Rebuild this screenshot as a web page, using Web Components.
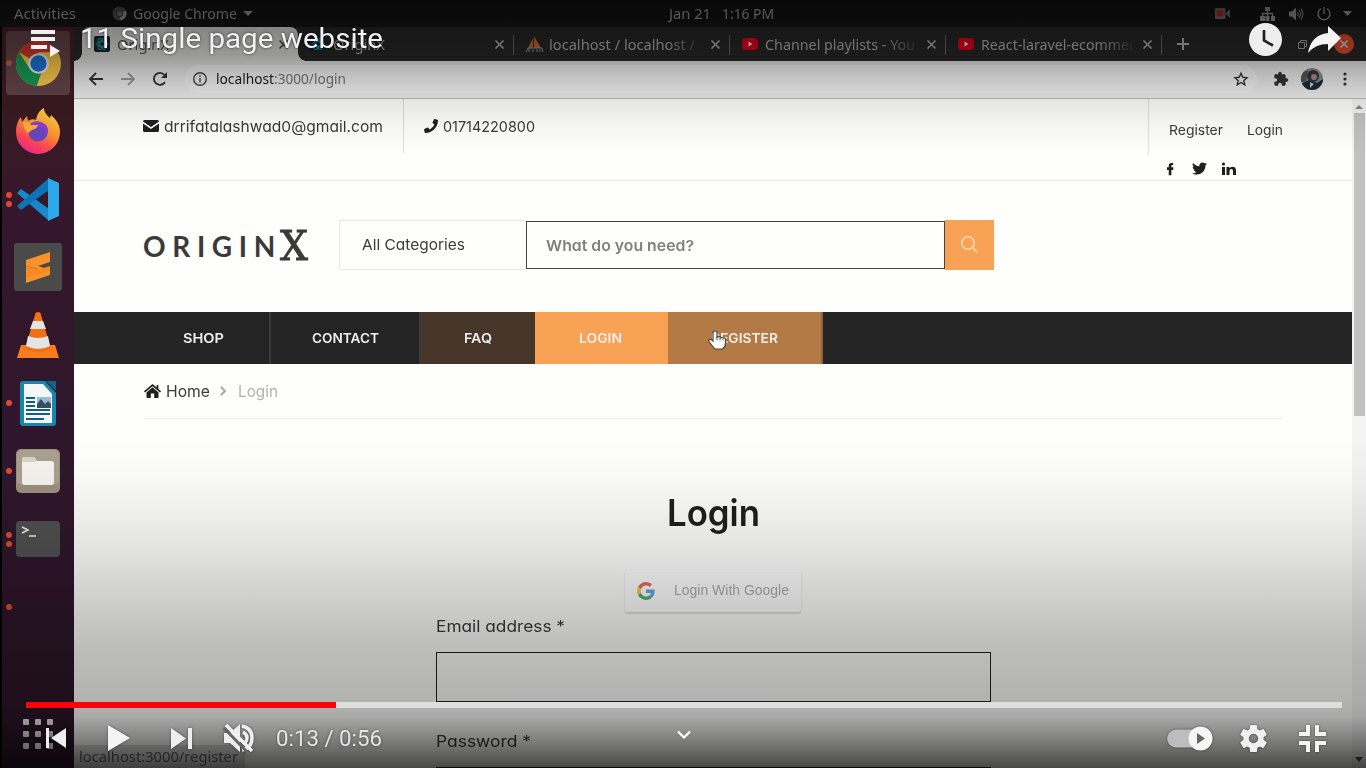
<!DOCTYPE html>
<html lang="en"><head><meta charset="utf-8"><title>11 Single page website</title>
<style>html,body{margin:0;background:#000;overflow:hidden}</style></head>
<body>
<video-player></video-player>
<script>
const define = (name, css, html, init) => {
  const t = document.createElement('template');
  t.innerHTML = `<style>*{box-sizing:border-box}svg{display:block;flex:none;overflow:visible}${css}</style>${html}`;
  customElements.define(name, class extends HTMLElement {
    constructor() { super(); this.attachShadow({mode: 'open'}).append(t.content.cloneNode(true)); }
    connectedCallback() { if (init) init.call(this, this.shadowRoot); }
  });
};

/* Text run fitted to the width in the w attribute: stretched by default, letter-spaced with the track attribute */
define('fit-text', `:host{display:block;flex:none;white-space:nowrap}span{display:inline-block;transform-origin:0 50%}`, `<span><slot></slot></span>`, function (r) {
  const w = +this.getAttribute('w'), s = r.querySelector('span');
  const nat = s.getBoundingClientRect().width;
  if (nat && this.hasAttribute('track')) s.style.letterSpacing = (w - nat) / this.textContent.length + 'px';
  else if (nat) s.style.transform = `scaleX(${w / nat})`;
  this.style.width = w + 'px';
});

define('system-bar', `
:host{display:flex;align-items:center;height:27px;background:#151515;color:#b0b0b0;font:13.5px "Noto Sans",sans-serif;padding:0 14px 0 14px}
.app{display:flex;align-items:center;margin-left:36px}.app svg:first-child{margin-right:6px}.app svg:last-child{margin-left:6px}
.date{display:flex;gap:11px;margin-left:416px}.tray{display:flex;align-items:center;margin-left:auto}
`, `
<fit-text w="62">Activities</fit-text>
<div class="app"><svg width="15" height="15" viewBox="0 0 16 16"><circle cx="8" cy="8" r="7.5" fill="#555"/><path d="M8 8 15 5A7.5 7.5 0 0 1 9 15.4z" fill="#aaa"/><circle cx="8" cy="8" r="3.5" fill="#777" stroke="#333"/></svg>
<fit-text w="104">Google Chrome</fit-text><svg width="10" height="5"><path d="M0 0h10L5 5z" fill="#b0b0b0"/></svg></div>
<div class="date"><fit-text w="42">Jan 21</fit-text><fit-text w="52">1:16 PM</fit-text></div>
<div class="tray">
<svg width="15" height="11" style="margin-right:30px"><rect width="10.5" height="11" rx="1" fill="#777"/><path d="M11 5 15 1v9l-4-4z" fill="#777"/><circle cx="5" cy="5.5" r="3.3" fill="#d22"/></svg>
<svg width="15" height="14" style="margin-right:14px" fill="#aaa"><path d="M5 0h5v4H5zM0 9h5v5H0zM5.500 9h4v5h-4zM11 9h4v5h-4z"/><path d="M7.500 3v7M2.500 10V6.500h10V10" fill="none" stroke="#aaa" stroke-width="1.300"/></svg>
<svg width="14" height="14" style="margin-right:14px"><path d="M0 4.500h3l4-4v13l-4-4H0z" fill="#aaa"/><path d="M8.500 5q1.500 2 0 4M10 3q3.300 4 0 8M12 1.500q4 5.500 0 11" fill="none" stroke="#999" stroke-width="1.100"/></svg>
<svg width="14" height="14" style="margin-right:12px" fill="none" stroke="#aaa" stroke-width="1.400"><path d="M4 1.600A6 6 0 1 0 10 1.600M7 0v7"/></svg>
<svg width="9" height="5"><path d="M0 0h9L4.500 5z" fill="#b0b0b0"/></svg></div>`);

/* Dock launcher; the dots attribute gives the number of open windows */
define('dock-item', `
:host{display:flex;align-items:center;height:68px;width:72px}
.d{width:14px;display:flex;flex-direction:column;gap:3px;align-items:center}
i{width:6px;height:6px;border-radius:50%;background:#dc4b2f}
.t{width:44px;height:44px;display:flex;align-items:center;justify-content:center}
:host([active]) .t{box-shadow:0 0 0 10px #8c747877;border-radius:1px;background:#8c747877}
`, `<div class="d"></div><div class="t"><slot></slot></div>`, function (r) {
  r.querySelector('.d').innerHTML = '<i></i>'.repeat(+this.getAttribute('dots') || 0);
});

define('app-dock', `
:host{display:block;width:74px;flex:none;border-left:2px solid #000;padding-top:2px;background:linear-gradient(#481f25,#3a1a22 80px,#34172c 190px,#2f162c 60%,#2b1527)}
`, `
<dock-item active dots="1"><svg width="45" height="45" viewBox="0 0 48 48"><circle cx="24" cy="24" r="24" fill="#fbc94b"/><path d="M24 24 3.200 12A24 24 0 0 1 44.800 12H24z" fill="#d93a31"/><path d="M3.200 12 15 30 27 34 22 48A24 24 0 0 1 3.200 12z" fill="#169a54"/><circle cx="24" cy="24" r="11" fill="#eee"/><circle cx="24" cy="24" r="8.700" fill="#1a73d4"/></svg></dock-item>
<dock-item><svg width="46" height="46" viewBox="0 0 46 46"><defs><linearGradient id="f" x1=".8" y1="0" x2=".3" y2="1"><stop offset="0" stop-color="#ffe14a"/><stop offset=".45" stop-color="#ff9430"/><stop offset=".75" stop-color="#ff4553"/><stop offset="1" stop-color="#e6268c"/></linearGradient></defs><path d="M23 46A22 22 0 0 1 1 24C1 16 4 11 6 9l1 5 5-6 1 5c3-2 6-2 8-1C22 6 25 2 29 0c0 5 3 7 6 10l1-3c6 5 9 11 9 17a22 22 0 0 1-22 22z" fill="url(#f)"/><circle cx="23" cy="24" r="9.500" fill="#6b45c0"/><path d="M14 17q7-7 16-1 5 4 2 12 0-8-8-9-4 3-8 3-4 0-7-3z" fill="#8b3fd0"/><path d="M8 14q6-1 8 3h7q-1 4-6 5l-4 3q-5-4-5-11z" fill="#ffad3a"/></svg></dock-item>
<dock-item dots="2"><svg width="43" height="43" viewBox="0 0 43 43"><path d="M0 15 4 11 32 31v12z" fill="#1589cc"/><path d="M0 28 4 32 32 12V0z" fill="#0f72b4"/><path d="M31 0 42 5v33l-11 5z" fill="#2ba7ea"/></svg></dock-item>
<dock-item><svg width="48" height="48"><rect width="48" height="48" rx="3" fill="#4a4a48"/><path d="M12 17 36 9v10l-12 4 12 4v5l-24 8V30l12-4-12-3z" fill="#fb9229"/><path d="M12 23l13 3.500L36 23v5l-24 7z" fill="#f98a23"/></svg></dock-item>
<dock-item><svg width="42" height="46" viewBox="0 0 42 46"><path d="M4 33h34l4 13H0z" fill="#f57f1f"/><path d="M18.500 1q2.500-2 5 0L34 37q-13 7-26 0z" fill="#f36f14"/><path d="M16 9h10l3 8H13zM11 24q10 4 20 0l2 10q-12 6-24 0z" fill="#e4e4e4"/></svg></dock-item>
<dock-item dots="1"><svg width="36" height="45"><path d="M3 0h22l11 12v30q0 3-3 3H3q-3 0-3-3V3q0-3 3-3z" fill="#1886ad"/><path d="M4 3h19l9 10v29H4z" fill="#f3f6f7"/><path d="M26 0h10v10z" fill="#116483"/><path d="M6 17h9M6 21h9M6 25h9M6 29h24M6 33h24M6 38h18" stroke="#165c80" stroke-width="2"/><path d="M17 16h14v11H17z" fill="#95bdd5"/><path d="M17 27v-4l4-5 4 5 3-3 3 3v4z" fill="#39505c"/></svg></dock-item>
<dock-item dots="1"><svg width="44" height="44"><rect width="44" height="44" rx="5" fill="#9b907f"/><rect x="1" y="1" width="42" height="35" rx="5" fill="#aaa08f"/><path d="M6 11q0-3 3-3h9l3 4h14q3 0 3 3v18q0 3-3 3H9q-3 0-3-3z" fill="#f5f3ee"/><path d="M6 11q0-3 3-3h9l3 4-3 1H6z" fill="#d8d3c9"/></svg></dock-item>
<dock-item dots="2"><svg width="44" height="36"><rect width="44" height="36" rx="4" fill="#4f4f4f"/><path d="M6 6l6 3-6 3M13 15h7" fill="none" stroke="#eee" stroke-width="1.500"/></svg></dock-item>
<dock-item dots="1"></dock-item>`);

define('browser-tab', `
:host{display:flex;align-items:center;width:216px;flex:none;height:34px;padding:0 10px 0 12px;color:#b4b4b4;background:linear-gradient(#666,#666) 100% 55%/1px 20px no-repeat}
:host([active]){position:relative;background:#e6e6e5;border-radius:8px 8px 0 0;color:#555}
:host([active])::before,:host([active])::after{content:"";position:absolute;bottom:0;width:8px;height:8px}
:host([active])::before{left:-8px;background:radial-gradient(circle at 0 0,#0000 7.500px,#e6e6e5 8px)}
:host([active])::after{right:-8px;background:radial-gradient(circle at 100% 0,#0000 7.500px,#e6e6e5 8px)}
.i{width:17px;margin-right:6px}.t{width:151px;overflow:hidden;margin-right:auto;-webkit-mask:linear-gradient(90deg,#000 78%,#0002)}
`, `<div class="i"><slot name="icon"></slot></div><div class="t"><slot></slot></div><svg width="9" height="9"><path d="M.5.5l8 8m0-8-8 8" stroke="currentColor" stroke-width="1.700"/></svg>`);

const react = `<svg slot="icon" width="16" height="16"><rect width="16" height="16" rx="2" fill="#1c262b"/><g fill="none" stroke="#1ba5b8" stroke-width="1"><ellipse cx="8" cy="8" rx="6" ry="2.500"/><ellipse cx="8" cy="8" rx="6" ry="2.500" transform="rotate(60 8 8)"/><ellipse cx="8" cy="8" rx="6" ry="2.500" transform="rotate(120 8 8)"/></g></svg>`;
const yt = `<svg slot="icon" width="16" height="16"><rect y="2" width="16" height="12" rx="3.500" fill="#f0001c"/><path d="M6.500 5.500v5l4-2.500z" fill="#fff"/></svg>`;
define('tab-strip', `
:host{display:flex;align-items:center;height:34px;background:#282828;padding:0 12px 0 8px;font:14.5px "Noto Sans",sans-serif}
.r{margin-left:auto;display:flex;align-items:center;gap:27px}.plus{margin-left:15px}
`, `
<browser-tab active>${react}<fit-text w="52">OriginX</fit-text></browser-tab>
<browser-tab>${react}<fit-text w="52">OriginX</fit-text></browser-tab>
<browser-tab><svg slot="icon" width="18" height="17"><path d="M2 12 7 2v10zM8 12V0l7 12z" fill="#c96a2e"/><path d="M0 16 2 12h14l1 4" fill="none" stroke="#999"/><path d="M3 12v4m4-3v3m4-3v3m3-3v3" stroke="#999"/></svg><fit-text w="146">localhost / localhost /</fit-text></browser-tab>
<browser-tab>${yt}<fit-text w="150">Channel playlists - You</fit-text></browser-tab>
<browser-tab>${yt}<fit-text w="154">React-laravel-ecommer</fit-text></browser-tab>
<svg class="plus" width="12" height="12"><path d="M6 0v12M0 6h12" stroke="#bbb" stroke-width="2"/></svg>
<div class="r"><svg width="9" height="9" fill="none" stroke="#aaa"><path d="M.5 2.500h6v6h-6zM2.500 2V.5h6v6H7"/></svg>
<svg width="20" height="20"><circle cx="10" cy="10" r="10" fill="#ee4f2c"/><path d="M6.500 6.500l7 7m0-7-7 7" stroke="#ddd" stroke-width="1.700"/></svg></div>`);

define('address-bar', `
:host{display:flex;align-items:center;height:38px;background:linear-gradient(#e6e6e5,#efeeee 12px);border-bottom:1px solid #bbb;padding:0 19px 2px 15px;font:14px "Noto Sans",sans-serif;color:#222}
.b{display:flex;gap:18px}.o{flex:1;display:flex;align-items:center;height:28px;border-radius:14px;background:#f5f4f4;margin:0 16px 0 17px;padding:0 9px 0 8px}
.o fit-text{margin-left:9px}.p{color:#777;margin-left:0!important}.o svg:last-child{margin-left:auto}
`, `
<div class="b"><svg width="14" height="14" fill="none" stroke="#333" stroke-width="1.800"><path d="M14 7H1M7 1 1 7l6 6"/></svg>
<svg width="14" height="14" fill="none" stroke="#999" stroke-width="1.800"><path d="M0 7h13M7 1l6 6-6 6"/></svg>
<svg width="15" height="14" fill="none" stroke="#333" stroke-width="1.900"><path d="M12 10A6 6 0 1 1 11.500 3"/><path d="M14 0v6H8z" fill="#333" stroke="none"/></svg></div>
<div class="o"><svg width="14" height="14" fill="none" stroke="#444" stroke-width="1.400"><circle cx="7" cy="7" r="6.300"/><path d="M7 6v4.500M7 3.300v1.500"/></svg>
<fit-text w="58">localhost</fit-text><fit-text class="p" w="72">:3000/login</fit-text>
<svg width="14" height="14" viewBox="0 0 24 24"><path d="M12 2l3 7 7.500.7-5.700 5 1.700 7.300L12 18l-6.500 4 1.700-7.300-5.700-5L9 9z" fill="none" stroke="#333" stroke-width="2.300"/></svg></div>
<svg width="16" height="16" viewBox="0 0 24 24" fill="#333"><path d="M20.500 11H19V7a2 2 0 0 0-2-2h-4V3.500a2.500 2.500 0 0 0-5 0V5H4a2 2 0 0 0-2 2v3.800h1.500a2.700 2.700 0 0 1 0 5.400H2V20a2 2 0 0 0 2 2h3.800v-1.500a2.700 2.700 0 0 1 5.400 0V22H17a2 2 0 0 0 2-2v-4h1.500a2.500 2.500 0 0 0 0-5z"/></svg>
<svg width="22" height="22" style="margin:0 20px 0 12px"><clipPath id="c"><circle cx="11" cy="11" r="11"/></clipPath><g clip-path="url(#c)"><path d="M0 0h22v22H0z" fill="#888f94"/><circle cx="12" cy="8" r="6" fill="#33333a"/><circle cx="13" cy="9" r="3" fill="#a68f86"/><path d="M0 16 8 12l8 3 6-4v11H0z" fill="#1b2a38"/><path d="M0 5 7 2 5 14H0z" fill="#555"/><path d="M9 14l4 2-4 4z" fill="#c9c4c4"/></g></svg>
<svg width="4" height="14" fill="#333"><circle cx="2" cy="2" r="1.600"/><circle cx="2" cy="7" r="1.600"/><circle cx="2" cy="12" r="1.600"/></svg>`);

const muli = `Inter,"Open Sans",sans-serif;font-feature-settings:"cv11","ss03"`;
define('shop-topbar', `
:host{display:flex;height:82px;border-bottom:1px solid #e8e8e8;padding-left:69px;color:#3a3a3a;font:15px ${muli}}
.c{display:flex;align-items:center;height:54px;padding-right:20px;border-right:1px solid #ddd}.c fit-text{margin:1px 0 0 5px}.c+.c{border:0;padding-left:20px}
.r{margin-left:auto;width:204px}.l{display:flex;align-items:center;gap:24px;height:56px;padding:6px 0 0 20px;border-left:1px solid #e0e0e0;font-size:13.500px}
.s{display:flex;align-items:center;gap:15px;padding:6px 0 0 19px}
`, `
<div class="c"><svg width="16" height="12" fill="#1f1f1f"><path d="M0 1.500Q0 0 1.500 0h13Q16 0 16 1.500L8 7zM0 3.500 8 9l8-5.500v7q0 1.500-1.500 1.500h-13Q0 12 0 10.500z"/></svg><fit-text w="219">drrifatalashwad0@gmail.com</fit-text></div>
<div class="c"><svg width="14" height="14" viewBox="0 0 512 512"><path d="M493 25 389 1c-11-3-23 3-27 14l-48 112c-4 10-1 22 7 28l61 50c-36 77-99 140-177 177l-50-61c-7-8-18-11-28-7L15 362c-11 5-17 16-14 27l24 104c3 11 12 19 24 19 256 0 463-207 463-463 0-12-8-22-19-24z" fill="#1f1f1f"/></svg><fit-text w="92">01714220800</fit-text></div>
<div class="r"><div class="l"><fit-text w="54">Register</fit-text><fit-text w="36">Login</fit-text></div>
<div class="s"><svg width="7" height="14" viewBox="0 0 8 14" fill="#1f1f1f"><path d="M2 14V8H0V5h2V3q0-3 3-3h2v2.500H5.500Q5 2.500 5 3.500V5h2.300L7 8H5v6z"/></svg>
<svg width="15" height="15" viewBox="0 0 512 512" style="margin:0 0 0 3px" fill="#1f1f1f"><path d="M459 152c.3 4.500.3 9 .3 13.600C459 304 353 464 161 464c-59 0-115-17-161-47 8 1 16 1.300 25 1.300 49 0 94-17 130-45-46-1-85-31-98-73 7 1 13 2 20 2 10 0 19-1 28-4-48-10-84-52-84-103v-1c14 8 30 13 47 13C40 189 21 157 21 120c0-19 5-37 14-53 52 64 130 106 217 110-2-8-3-16-3-24 0-58 47-105 105-105 30 0 57 13 77 33 24-5 46-13 66-25-8 24-24 45-46 58 21-2 42-8 60-16-14 21-32 39-52 54z"/></svg>
<svg width="14" height="14" fill="#1f1f1f"><path d="M0 5h3v8H0zM4.500 5h3v1.200Q8.500 4.700 10.500 4.700 14 4.700 14 8.500V13h-3V9q0-2-1.700-2T7.500 9v4h-3z"/><circle cx="1.500" cy="2" r="1.600"/></svg></div></div>`);

define('shop-search', `
:host{display:flex;align-items:center;height:131px;padding:0 0 3px 69px;font:15px ${muli};color:#3c3c3c}
.g{display:flex;width:196px;align-items:center;color:#3a3a3a}
.o{font:700 28px Lato,sans-serif;padding-top:2px}.x{width:30px;font:41px/44px "DejaVu Serif",serif;-webkit-text-stroke:.9px #3a3a3a;margin:2px 0 0 -2px}
.a{width:187px;height:50px;border:1px solid #e8e8e8;border-right:0;display:flex;align-items:center;padding:0 0 1px 22px}
.i{width:419px;height:48px;border:1px solid #222;outline:.5px solid #444;outline-offset:-1px;display:flex;align-items:center;padding-left:19px;font-weight:600;color:#808080}
.b{width:49px;height:50px;background:#f7a254;display:flex;align-items:center;justify-content:center;padding-bottom:2px}
`, `
<div class="g"><fit-text class="o" w="139" track>ORIGIN</fit-text><fit-text class="x" w="28">X</fit-text></div>
<div class="a"><fit-text w="103">All Categories</fit-text></div>
<div class="i"><fit-text w="148">What do you need?</fit-text></div>
<div class="b"><svg width="17" height="17" fill="none" stroke="#fcdcae" stroke-width="1.600"><circle cx="7" cy="7" r="6.200"/><path d="m11.500 11.500 5 5"/></svg></div>`);

define('nav-link', `:host{display:flex;justify-content:center;align-items:center;height:52px;flex:none;background:var(--bg,#252424);color:#f0eeee;border-right:2px solid var(--line,#3b3939)}`, `<slot></slot>`);
define('shop-nav', `
:host{display:flex;height:52px;background:#252424;padding-left:64px;font:600 13.500px ${muli}}
`, `
<nav-link style="width:133px"><fit-text w="41">SHOP</fit-text></nav-link>
<nav-link style="width:150px"><fit-text w="67">CONTACT</fit-text></nav-link>
<nav-link style="width:114px;padding-left:2px;--bg:#463529;--line:#463529"><fit-text w="28">FAQ</fit-text></nav-link>
<nav-link style="width:133px;--bg:#f7a254;--line:#f7a254"><fit-text w="43">LOGIN</fit-text></nav-link>
<nav-link style="width:155px;--bg:#b37a45;--line:#8a6543"><fit-text w="67">REGISTER</fit-text></nav-link>`);

define('bread-crumb', `
:host{display:flex;align-items:center;height:55px;margin:0 70px;border-bottom:1px solid #ececec;font:15.500px ${muli};color:#3a3a3a}
.n{color:#b3b3b3}
`, `<svg width="17" height="14" fill="#1f1f1f"><path d="M8.500 3.200 14.500 8.500V13q0 1-1 1h-3.300V9.500H6.800V14H3.500q-1 0-1-1V8.500z"/><path d="M.5 7.800 8.500 1l8 6.800M13.500 1v4" fill="none" stroke="#1f1f1f" stroke-width="1.700"/></svg>
<fit-text w="44" style="margin-left:5px">Home</fit-text><svg width="6" height="10" style="margin:0 12px 0 10px"><path d="m.8.800 4.200 4.200-4.200 4.200" fill="none" stroke="#aaa" stroke-width="2"/></svg><fit-text class="n" w="40">Login</fit-text>`);

define('login-form', `
:host{display:flex;flex-direction:column;width:555px;margin-left:362px;font:16px/20px ${muli};color:#3a3a3a}
h2{margin:70px 0 0;font:600 37px/48px ${muli};color:#1f1f1f;align-self:center;padding-right:1px}
.g{align-self:center;display:flex;align-items:center;width:176px;height:42px;margin:33px 1px 0 0;padding:0 0 3px 12px;background:#fff;border-radius:2px;box-shadow:0 2px 2px #0002,0 0 1px #0002;font:14px "Liberation Sans",sans-serif;color:#adadad}
.l{margin-top:4px}.f{height:50px;border:1.500px solid #222;margin:16px 0 29px}.f+.l{margin-top:0}
`, `
<h2><fit-text w="93">Login</fit-text></h2>
<div class="g"><svg width="18" height="18" viewBox="0 0 48 48" style="opacity:.8;margin:3px 19px 0 0"><path fill="#EA4335" d="M24 9.500c3.540 0 6.710 1.220 9.210 3.600l6.850-6.850C35.900 2.380 30.470 0 24 0 14.620 0 6.510 5.380 2.560 13.220l7.980 6.190C12.430 13.720 17.740 9.500 24 9.500z"/><path fill="#3596d8" d="M46.980 24.550c0-1.570-.15-3.090-.38-4.550H24v9.020h12.940c-.58 2.960-2.260 5.480-4.780 7.180l7.730 6c4.510-4.180 7.090-10.360 7.090-17.650z"/><path fill="#FBBC05" d="M10.530 28.590A14.500 14.500 0 0 1 9.770 24c0-1.600.27-3.140.76-4.590l-7.980-6.190A23.900 23.900 0 0 0 0 24c0 3.880.92 7.540 2.560 10.780z"/><path fill="#26a050" d="M24 48c6.480 0 11.930-2.130 15.890-5.810l-7.730-6c-2.150 1.450-4.920 2.300-8.160 2.300-6.260 0-11.570-4.220-13.470-9.910l-7.980 6.190C6.510 42.620 14.620 48 24 48z"/></svg><fit-text w="115">Login With Google</fit-text></div>
<div class="l"><fit-text w="129">Email address *</fit-text></div><div class="f"></div>
<div class="l"><fit-text w="95">Password *</fit-text></div><div class="f"></div>`);

define('scroll-bar', `:host{display:flex;flex-direction:column;align-items:center;width:14px;background:#f3f3f3}
.t{width:11px;height:303px;background:#c1c1c1;margin:4px 0 auto}`, `<svg width="8" height="4" style="margin-top:6px"><path d="M0 4h8L4 0z" fill="#888"/></svg><div class="t"></div><svg width="8" height="5" style="margin-bottom:6px"><path d="M0 0h8L4 5z" fill="#444"/></svg>`);

define('web-browser', `
:host{display:flex;flex-direction:column;flex:1;min-width:0;background:#252424}
.v{display:flex;flex:1;min-height:0;background:#fefefd}.p{flex:1;overflow:hidden}
`, `<tab-strip></tab-strip><address-bar></address-bar><div class="v"><div class="p"><shop-topbar></shop-topbar><shop-search></shop-search><shop-nav></shop-nav><bread-crumb></bread-crumb><login-form></login-form></div><scroll-bar></scroll-bar></div>`);

/* Desktop capture shown in the video, with pointer and status bubble floating above the page */
define('desktop-scene', `
:host{display:flex;flex-direction:column;position:relative;height:768px;overflow:hidden}
.m{display:flex;flex:1;min-height:0}
.cur{position:absolute;left:708px;top:330px}
.st{position:absolute;left:74px;bottom:0;height:23px;width:171px;padding:2px 5px;background:#dedede;border-radius:0 4px 0 0;color:#666;font:14px/20px "Noto Sans",sans-serif}
.apps{position:absolute;left:23px;top:719px;display:grid;grid-template-columns:repeat(3,6px);gap:6px}.apps i{height:6px;background:#eee;border-radius:1px}
`, `<system-bar></system-bar><div class="m"><app-dock></app-dock><web-browser></web-browser></div>
<div class="apps"><i></i><i></i><i></i><i></i><i></i><i></i><i></i><i></i><i></i></div>
<div class="st"><fit-text w="159">localhost:3000/register</fit-text></div>
<svg class="cur" width="19" height="20"><path d="M5 3q0-2 2-2t2 2v4q1-1 2 0 2-1 2 1 2-1 2.500 0 2-.5 2 1.500V13q0 4-3 6H7Q5 17 1 11.500 0 9 3 9.500l2 1.500z" fill="#fff" stroke="#444" stroke-width="1.200"/><path d="M9 7v3M12 8v2.500M15 8.500v2" stroke="#555"/></svg>`);

define('player-controls', `
:host{position:absolute;inset:0;display:flex;flex-direction:column;font-family:Roboto,sans-serif;color:#f2f2f2;
background:linear-gradient(#0009,#0000006b 28px,#0005 55px,#00000040 68px,#0000001c 95px,#0000000a 125px,#0000 155px,#0000 440px,#00000006 480px,#00000018 540px,#00000030 600px,#00000042 650px,#0000004c 700px,#00000054 716px,#00000086 743px,#000000b8 768px)}
.top{display:flex;height:76px;padding-left:30px}.top .q{margin:30px 19px 0 0}
.title{font-size:28.500px;line-height:34px;margin-top:22px;text-shadow:0 0 3px #000a}
.top .k{margin:23px 26px 0 auto}.top .s{margin:26px 25px 0 0}
.bar{margin:auto 24px 0 26px;height:6px;background:#dedede;display:flex}.bar i{width:310px;background:#f90509}
.c{height:60px;display:grid;grid-template-columns:1fr auto 1fr;align-items:center;padding:0 40px 0 46px}
.l{display:flex;align-items:center;filter:drop-shadow(0 0 1.500px #0006)}.time{font-size:22.500px;color:#e4e4e4}
.r{display:flex;align-items:center;justify-content:flex-end;filter:drop-shadow(0 0 1px #0008)}
`, `
<div class="top"><svg class="q" width="31" height="27" fill="#f2f2f2"><path d="M1 0h24v4H1zM1 7h24v4H1zM1 15h16v4H1zM20 15l10 6-10 6z"/></svg><fit-text class="title" w="303">11 Single page website</fit-text>
<svg class="k" width="33" height="33"><circle cx="16.500" cy="16.500" r="16.500" fill="#eee"/><path d="M15 7v10.500l9 5" fill="none" stroke="#222" stroke-width="2.700"/></svg>
<svg class="s" width="33" height="27"><path d="M20 0v7Q3 9 0 27q7-9 20-9v7l13-13z" fill="#f4f4f4"/></svg></div>
<div class="bar"><i></i></div>
<div class="c"><div class="l">
<svg width="20" height="20" fill="#eee"><path d="M0 0h3v20H0zM20 0v20L5 10z"/></svg>
<svg width="22" height="26" style="margin:0 41px 0 42px" fill="#f4f4f4"><path d="M0 0v26l22-13z"/></svg>
<svg width="21" height="21" fill="#eee"><path d="M0 0v21l15-10.500zM17 0h4v21h-4z"/></svg>
<svg width="30" height="30" style="margin:0 22px 0 32px"><path d="M0 10h6l10-9v28l-10-9H0z" fill="#eee"/><path d="M19 9q4 2 4 6 0 3-2 5M18 3q10 2 10 12 0 10-10 12" fill="none" stroke="#eee" stroke-width="3.500"/><path d="M0 5 26 32" stroke="#666" stroke-width="3"/><path d="M2 2l26 26" stroke="#f2f2f2" stroke-width="3.500"/></svg>
<fit-text class="time" w="106">0:13 / 0:56</fit-text></div>
<svg width="14" height="9" style="margin:-8px 4px 0 0"><path d="M1 1.500l6 6 6-6" fill="none" stroke="#fff" stroke-width="2.200"/></svg>
<div class="r">
<svg width="46" height="25" style="margin-right:27px"><rect y="3.500" width="40" height="18" rx="9" fill="#bdbdbd"/><circle cx="33.500" cy="12.500" r="12" fill="#f6f6f6"/><path d="M30 7v11l8-5.500z" fill="#666"/></svg>
<svg width="27" height="27" viewBox="2 2 20 20" style="margin-right:32px" fill="#f0f0f0"><path d="M19.430 12.980c.04-.32.07-.64.07-.98s-.03-.66-.07-.98l2.110-1.650c.19-.15.24-.42.120-.64l-2-3.460c-.12-.22-.39-.3-.61-.22l-2.490 1a7.300 7.300 0 0 0-1.690-.98l-.38-2.650A.490.490 0 0 0 14 2h-4c-.25 0-.46.180-.49.420l-.38 2.650c-.61.25-1.170.59-1.690.98l-2.490-1c-.23-.09-.49 0-.61.220l-2 3.460c-.13.22-.07.49.120.64l2.110 1.650c-.04.32-.07.650-.07.980s.03.660.07.980l-2.110 1.650c-.19.150-.24.42-.12.640l2 3.460c.12.220.39.300.61.220l2.490-1c.52.400 1.080.73 1.690.98l.38 2.650c.03.240.24.420.49.420h4c.25 0 .46-.18.490-.42l.38-2.650c.61-.25 1.170-.59 1.690-.98l2.490 1c.23.090.49 0 .61-.22l2-3.460c.12-.22.070-.49-.12-.64zM12 15.500a3.500 3.500 0 1 1 0-7 3.500 3.500 0 0 1 0 7z" fill-rule="evenodd"/></svg>
<svg width="27" height="27" fill="none" stroke="#f4f4f4" stroke-width="4"><path d="M0 9h9V0M18 0v9h9M0 18h9v9M27 18h-9v9"/></svg></div></div>`);

define('video-player', `:host{display:block;position:relative;width:1366px;height:768px;overflow:hidden}`, `<desktop-scene></desktop-scene><player-controls></player-controls>`);
</script></body></html>
